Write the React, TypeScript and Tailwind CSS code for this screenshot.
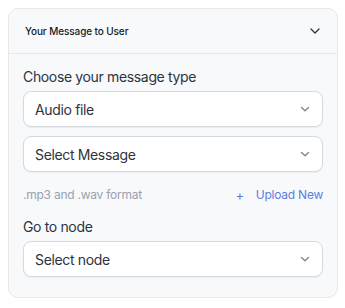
import React from "react";

const Chevron = ({ className = "", d }: { className?: string; d: string }) => (
  <svg width="10" height="10" viewBox="0 0 10 10" fill="none" className={className}>
    <path d={d} stroke="currentColor" strokeWidth="1.3" strokeLinecap="round" strokeLinejoin="round" />
  </svg>
);

const Select = ({ label }: { label: string }) => (
  <div className="flex h-[36px] items-center justify-between rounded-[8px] border border-[#d5d9e0] bg-white pl-[11px] pr-[12px] shadow-[0_1px_1px_rgba(16,24,40,0.05)]">
    <span className="text-[14px] tracking-[-0.35px] text-[#2d3340]">{label}</span>
    <Chevron d="M1.5 3.5L5 6.8L8.5 3.5" className="text-[#7a8291]" />
  </div>
);

export default function App() {
  return (
    <div className="p-2" style={{ fontFamily: "Inter, 'Noto Sans', sans-serif" }}>
      <div className="w-[330px] rounded-[10px] border border-[#e6e8ec] bg-[#f8f9fb]">
        <div className="flex h-[45px] items-center justify-between border-b border-[#e6e8ec] pl-[16px] pr-[17px]">
          <span className="text-[10px] font-medium tracking-[-0.1px] text-[#141a28]">Your Message to User</span>
          <Chevron d="M1 3L5 7L9 3" className="text-[#2a3345]" />
        </div>
        <div className="flex flex-col px-[14px] pt-[13px] pb-[20px]">
          <div className="text-[14px] leading-[20px] tracking-[-0.35px] text-[#2d3340]">Choose your message type</div>
          <div className="mt-[4px] flex flex-col gap-[9px]">
            <Select label="Audio file" />
            <Select label="Select Message" />
          </div>
          <div className="mt-[13px] flex items-center justify-between text-[12px] leading-[20px] tracking-[-0.24px]">
            <span className="text-[#9aa1ad]">.mp3 and .wav format</span>
            <span className="flex items-center gap-[12px] text-[#5a7fdc]">
              <span className="text-[13px]">+</span>
              <span>Upload New</span>
            </span>
          </div>
          <div className="mt-[12px] text-[14px] leading-[20px] tracking-[-0.35px] text-[#2d3340]">Go to node</div>
          <div className="mt-[4px]">
            <Select label="Select node" />
          </div>
        </div>
      </div>
    </div>
  );
}
